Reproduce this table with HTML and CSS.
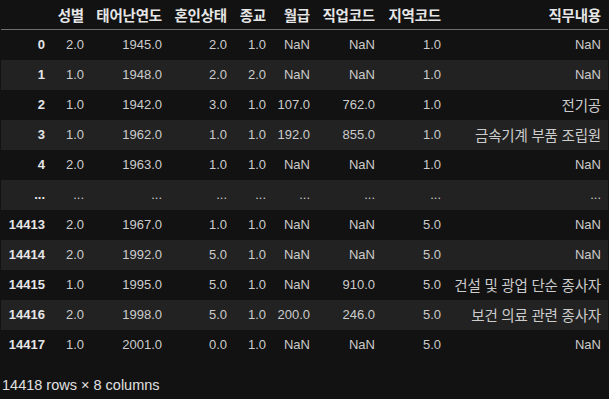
FILE: index.html
```html
<!DOCTYPE html>
<html lang="ko">
<head>
<meta charset="utf-8">
<link rel="stylesheet" href="styles.css">
</head>
<body>
<div class="output">
<table class="df">
<colgroup>
<col class="c-idx"><col class="c1"><col class="c2"><col class="c3"><col class="c4"><col class="c5"><col class="c6"><col class="c7"><col class="c8">
</colgroup>
<thead>
<tr><th></th><th class="ko">성별</th><th class="ko">태어난연도</th><th class="ko">혼인상태</th><th class="ko">종교</th><th class="ko">월급</th><th class="ko">직업코드</th><th class="ko">지역코드</th><th class="ko">직무내용</th></tr>
</thead>
<tbody>
<tr><th>0</th><td>2.0</td><td>1945.0</td><td>2.0</td><td>1.0</td><td>NaN</td><td>NaN</td><td>1.0</td><td>NaN</td></tr>
<tr><th>1</th><td>1.0</td><td>1948.0</td><td>2.0</td><td>2.0</td><td>NaN</td><td>NaN</td><td>1.0</td><td>NaN</td></tr>
<tr><th>2</th><td>1.0</td><td>1942.0</td><td>3.0</td><td>1.0</td><td>107.0</td><td>762.0</td><td>1.0</td><td class="ko">전기공</td></tr>
<tr><th>3</th><td>1.0</td><td>1962.0</td><td>1.0</td><td>1.0</td><td>192.0</td><td>855.0</td><td>1.0</td><td class="ko">금속기계 부품 조립원</td></tr>
<tr><th>4</th><td>2.0</td><td>1963.0</td><td>1.0</td><td>1.0</td><td>NaN</td><td>NaN</td><td>1.0</td><td>NaN</td></tr>
<tr class="ell"><th>...</th><td>...</td><td>...</td><td>...</td><td>...</td><td>...</td><td>...</td><td>...</td><td>...</td></tr>
<tr><th>14413</th><td>2.0</td><td>1967.0</td><td>1.0</td><td>1.0</td><td>NaN</td><td>NaN</td><td>5.0</td><td>NaN</td></tr>
<tr><th>14414</th><td>2.0</td><td>1992.0</td><td>5.0</td><td>1.0</td><td>NaN</td><td>NaN</td><td>5.0</td><td>NaN</td></tr>
<tr><th>14415</th><td>1.0</td><td>1995.0</td><td>5.0</td><td>1.0</td><td>NaN</td><td>910.0</td><td>5.0</td><td class="ko">건설 및 광업 단순 종사자</td></tr>
<tr><th>14416</th><td>2.0</td><td>1998.0</td><td>5.0</td><td>1.0</td><td>200.0</td><td>246.0</td><td>5.0</td><td class="ko">보건 의료 관련 종사자</td></tr>
<tr><th>14417</th><td>1.0</td><td>2001.0</td><td>0.0</td><td>1.0</td><td>NaN</td><td>NaN</td><td>5.0</td><td>NaN</td></tr>
</tbody>
</table>
<p class="shape">14418 rows × 8 columns</p>
</div>
</body>
</html>
```
FILE: styles.css
```css
html, body {
  margin: 0;
  padding: 0;
  background: #121212;
}
body {
  font-family: "Liberation Sans", "Noto Sans CJK KR", sans-serif;
  font-size: 13px;
  color: #cccccc;
}
.output {
  padding-left: 1px;
}
.df {
  border-collapse: collapse;
  table-layout: fixed;
  width: 607px;
}
.c-idx { width: 51px; }
.c1 { width: 39px; }
.c2 { width: 78px; }
.c3 { width: 65px; }
.c4 { width: 39px; }
.c5 { width: 44px; }
.c6 { width: 65px; }
.c7 { width: 66px; }
.c8 { width: 160px; }
.df th, .df td {
  text-align: right;
  padding: 0 7px 0 0;
  white-space: nowrap;
  overflow: visible;
}
.df .ko {
  font-size: 14.5px;
  letter-spacing: -0.2px;
}
.df thead th {
  height: 29px;
  font-weight: bold;
  color: #e6e6e6;
  border-bottom: 1px solid #6e6e6e;
  vertical-align: middle;
}
.df tbody tr {
  height: 30px;
}
.df tbody tr:nth-child(even) {
  background: #222222;
}
.df tbody th {
  font-weight: bold;
  color: #e6e6e6;
}
.shape {
  margin: 16px 0 0 1px;
  line-height: 18px;
  font-size: 14.5px;
  color: #e0e0e0;
}
```
